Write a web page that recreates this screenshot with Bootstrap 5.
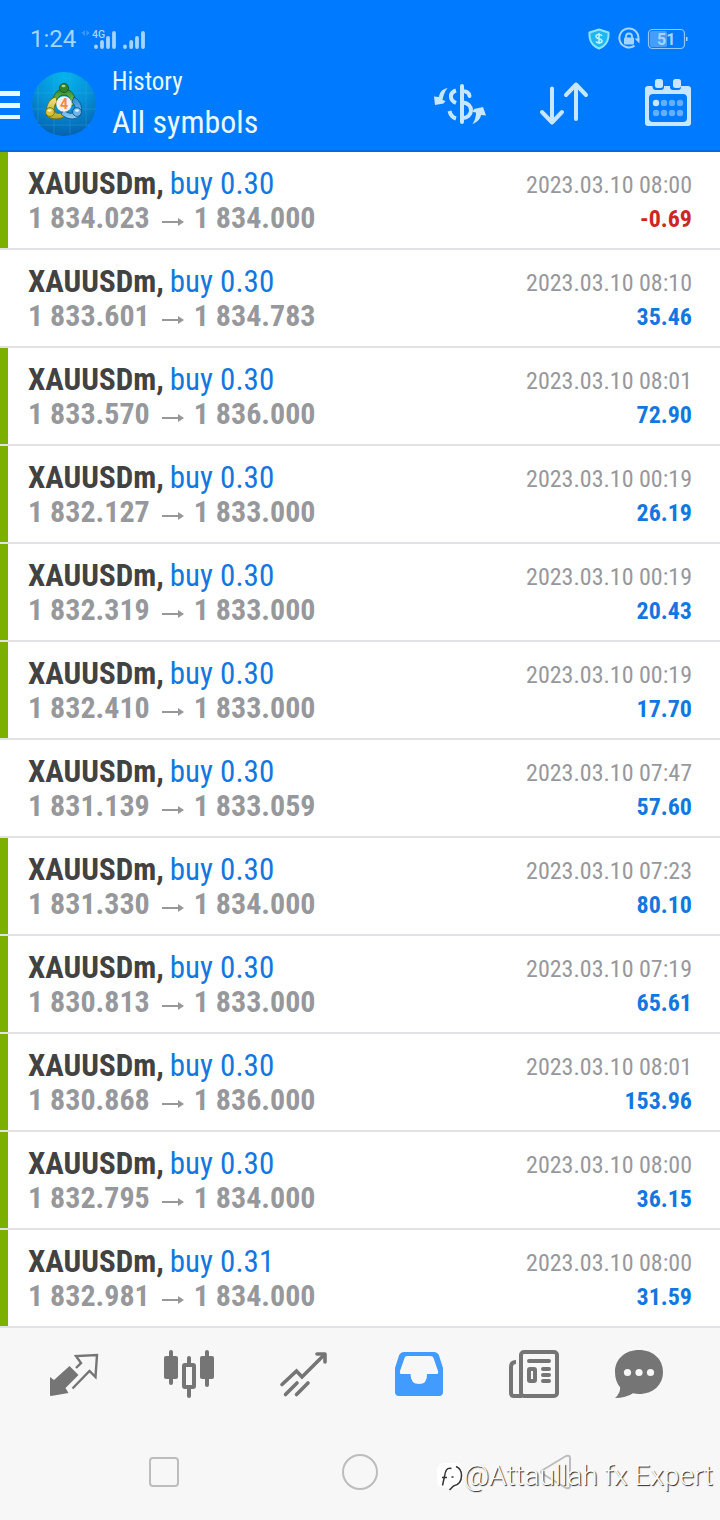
<!DOCTYPE html>
<html lang="en">
<head>
<meta charset="utf-8">
<meta name="viewport" content="width=device-width, initial-scale=1">
<title>History</title>
<link href="https://cdn.jsdelivr.net/npm/bootstrap@5.3.0/dist/css/bootstrap.min.css" rel="stylesheet">
<style>
  body { font-family: "Roboto Condensed", Roboto, sans-serif; background: #f7f7f7; color: #424242; }
  svg { display: block; flex: none; }
  .top-area { background: #007aff; border-bottom: 2px solid #0a68d8; }
  .status-bar { height: 58px; padding: 20px 32px 0 30px; font-family: Roboto, sans-serif; color: #a5d4ff; }
  .clock { font-size: 24px; line-height: 36px; }
  .app-bar { height: 92px; color: #e8f8ff; }
  .app-logo { margin-left: 12px; margin-right: 16px; }
  .screen-name { font-size: 25px; line-height: 32px; margin: 0; font-weight: 400; }
  .screen-filter { font-size: 32px; line-height: 40px; margin-top: 4px; }
  .plain-btn { background: none; border: 0; padding: 0; display: flex; align-items: center; justify-content: center; }
  .tool-btn { width: 104px; height: 92px; }
  .deal { height: 98px; padding: 14px 28px 0 28px; line-height: 34px; background: #fff; border-bottom: 2px solid #e2e2e4; }
  .deal.closed-tp { background: linear-gradient(#7cb000, #7cb000) left / 8px 100% no-repeat #fff; background-clip: padding-box; }
  .deal-title { display: flex; gap: 6px; font-size: 31px; line-height: 36px; }
  .deal-title a { color: #1477e0; text-decoration: none; }
  .deal-price { font-size: 30px; line-height: 32px; font-weight: 700; color: #97989c; }
  .deal-side { font-size: 24px; padding-top: 2px; color: #97989c; }
  .profit { font-weight: 700; color: #1477e0; }
  .loss { color: #cc2626; }
  .tab-bar { display: grid; grid-template-columns: repeat(5, 6fr) 5fr; padding: 0 33px 4px 17px; height: 96px; color: #757575; }
  .nav-keys { height: 96px; padding: 0 66px; }
  .nav-keys .plain-btn { flex: 1; }
  .signature { right: 7px; bottom: 26px; font: 300 28px/36px Roboto, sans-serif; color: #fff; text-shadow: 1px 1px 1px #222; pointer-events: none; }
</style>
</head>
<body>
<header class="top-area">
  <div class="status-bar d-flex justify-content-between align-items-center">
    <div class="d-flex align-items-center">
      <span class="clock">1:24</span>
      <svg width="72" height="24" viewBox="77 26 72 24" fill="#a5d4ff" aria-label="Signal 4G">
        <path d="M86 29v6l-3.500-3zM87.500 29v6l3-3z" opacity=".35"/>
        <text x="93" y="37" font-size="10.500" font-family="Roboto" font-weight="500">4G</text>
        <g stroke="#a5d4ff" stroke-width="3.800" stroke-linecap="round"><path d="M97 45.500v.5M103 41v5M109 37v9M115 32v14M126 45.500v.5M132.200 41v5M138 37v9M144 32v14"/></g>
      </svg>
    </div>
    <svg width="101" height="26" viewBox="587 25 101 26" fill="none" aria-label="Battery 51 percent">
      <path d="M599 28.500l9.500 3c.5 7-1 12.500-9.500 16-8.500-3.500-10-9-9.500-16z" fill="#1fb6f5" stroke="#8ee4f8" stroke-width="2" stroke-linejoin="round"/>
      <path d="M602 35c-1-2-6-2-6 .5 0 3 6 1.500 6 4.500 0 2.500-5 2.500-6 .3M599 32v11" stroke="#b6f2ff" stroke-width="1.600"/>
      <path d="M634.500 44.600a9.500 9.500 0 1 1 3.500-5" stroke="#a5d4ff" stroke-width="2"/>
      <path d="M634.500 37.500h5v5z" fill="#a5d4ff"/>
      <rect x="624" y="36.500" width="10" height="7" rx="1" fill="#a5d4ff"/>
      <path d="M626 37v-1.500a3 3 0 0 1 6 0V37" stroke="#a5d4ff" stroke-width="1.800"/>
      <rect x="650" y="30" width="17" height="16" rx="2" fill="#479dff"/>
      <rect x="648.500" y="28.500" width="36" height="19" rx="4" stroke="#8fc8ff" stroke-width="1.200"/>
      <path d="M686 36h1.500v4H686z" fill="#a5d4ff"/>
      <text x="657" y="44" font-size="16" font-family="Roboto" font-weight="700" fill="#a5d4ff">51</text>
    </svg>
  </div>
  <div class="app-bar d-flex">
    <button class="plain-btn" type="button" aria-label="Menu">
      <svg width="20" height="30" viewBox="0 0 20 30" fill="#e8f8ff"><path d="M0 2h20v5H0zM0 14h20v5H0zM0 26h20v5H0z"/></svg>
    </button>
    <svg class="app-logo align-self-center" width="64" height="64" viewBox="0 0 64 64" aria-label="App logo">
      <defs>
        <radialGradient id="disc" cx=".5" cy=".08" r=".95"><stop offset="0" stop-color="#06b4ec"/><stop offset=".5" stop-color="#0690d6"/><stop offset="1" stop-color="#045fae"/></radialGradient>
        <linearGradient id="gr" x2="0" y2="1"><stop offset="0" stop-color="#2f8a2a"/><stop offset="1" stop-color="#8fd070"/></linearGradient>
        <linearGradient id="ye" x2="0" y2="1"><stop offset="0" stop-color="#efe67a"/><stop offset="1" stop-color="#b8a81c"/></linearGradient>
        <linearGradient id="bl" x2="0" y2="1"><stop offset="0" stop-color="#2b8bd2"/><stop offset="1" stop-color="#8ccdf5"/></linearGradient>
      </defs>
      <circle cx="32" cy="32" r="32" fill="url(#disc)"/>
      <path d="M22 2v60M38 1v62M54 9v46M6 14v36M3 21h58M0 37h64M6 53h52" stroke="#49c3ee" stroke-width=".7" opacity=".35"/>
      <g stroke-width=".8">
        <path d="M21 33c-1-10 4-16 11-16s12 6 11 15l-4 2c0-7-2-11-7-11s-8 4-7 10z" fill="url(#gr)" stroke="#16551a"/>
        <path d="M24 25c-8 2-11 11-9 19 4 4 14 4 20-1l-2-4c-4 3-8 3-10 1-2-4 0-8 2-10z" fill="url(#ye)" stroke="#6a6410"/>
        <path d="M42 25c8 4 9 13 6 19-6 5-14 3-19-2l3-4c4 4 8 4 11 2 1-4 0-7-3-10z" fill="url(#bl)" stroke="#0b4c86"/>
        <circle cx="32" cy="16" r="4.600" fill="#35812c" stroke="#16551a"/>
        <circle cx="18" cy="40" r="4.400" fill="#d6c63a" stroke="#6a6410"/>
        <circle cx="45" cy="40" r="4.400" fill="#6cb4e8" stroke="#0b4c86"/>
      </g>
      <ellipse cx="31.500" cy="14" rx="2" ry="1.200" fill="#a3d494"/><ellipse cx="17.500" cy="38.500" rx="2" ry="1.200" fill="#f8f2a8"/><ellipse cx="45" cy="38.500" rx="2" ry="1.200" fill="#d7f0ff"/>
      <circle cx="32" cy="32" r="7.800" fill="#f3f1ec"/>
      <text x="32" y="37" text-anchor="middle" font-family="Roboto" font-size="14" font-weight="700" fill="#f08a45">4</text>
    </svg>
    <div class="flex-grow-1 pt-2">
      <h1 class="screen-name">History</h1>
      <div class="screen-filter">All symbols</div>
    </div>
    <button class="plain-btn tool-btn" type="button" aria-label="Symbol">
      <svg width="54" height="46" viewBox="433 80 54 46" fill="none" stroke="#c8e7ff" stroke-width="4">
        <path d="M462 85v36M462 90c4 0 7 1.500 7.500 5" stroke-linecap="round"/>
        <path d="M456 89.500c-6.500 2-7 9.500 0 12.500M462 101.500c12 0 12 15.500 0 15.500M456 117.500c-3.500-1-5.500-3.500-6.500-7.500"/>
        <path d="M447.500 87c-5 1-8 4-8.500 9l-5-.5 1 8.500 8.500-1.500 2-2.500-3-1c1-5 2-8 5-12zM472.500 123c5-2 8-5 8.500-9l5 .5-3-8.500-9 2-1.500 3 3.500.5c0 4-1 8-3.500 11.500z" fill="#c8e7ff" stroke="none"/>
      </svg>
    </button>
    <button class="plain-btn tool-btn" type="button" aria-label="Sort">
      <svg width="50" height="46" viewBox="539 81 50 46" fill="none" stroke="#c8e7ff" stroke-width="4" stroke-linecap="round" stroke-linejoin="round"><path d="M552 88.500v34M542 112l10 10.500L562 112M576 119V84.500M566 95l10-10.500L586 95"/></svg>
    </button>
    <button class="plain-btn tool-btn" type="button" aria-label="Period">
      <svg width="46" height="48" viewBox="645 80 46 48" overflow="visible">
        <path fill="#c8e7ff" fill-rule="evenodd" d="M648 86h4.500v1q.5 3 3 3h5.500q3 0 3-3v-1h6v1q0 3 3 3h5q3 0 3-3v-1h7q3 0 3 3v34q0 3-3 3h-40q-3 0-3-3V89q0-3 3-3zM653 94q-4 0-4 4v20q0 4 4 4h30q4 0 4-4V98q0-4-4-4z"/>
        <rect x="655" y="79" width="8" height="9" rx="2.500" fill="#c8e7ff"/><rect x="673" y="79" width="8" height="9" rx="2.500" fill="#c8e7ff"/>
        <circle cx="656" cy="103" r="3.200" fill="#c8e7ff"/>
        <g fill="#62afff"><circle cx="664" cy="103" r="3.200"/><circle cx="672" cy="103" r="3.200"/><circle cx="680" cy="103" r="3.200"/><circle cx="656" cy="113" r="3.200"/><circle cx="664" cy="113" r="3.200"/><circle cx="672" cy="113" r="3.200"/><circle cx="680" cy="113" r="3.200"/></g>
      </svg>
    </button>
  </div>
</header>

<main>
  <ul class="list-unstyled m-0" id="deals"></ul>
</main>

<footer class="position-relative">
  <nav class="tab-bar" aria-label="Sections">
    <button class="plain-btn" type="button" aria-label="Quotes">
      <svg width="50" height="50" viewBox="49 1349 50 50" fill="#757575"><path d="M50 1377l4 3 15.500-14 9 9-13 13 3 5-17.500 3q-1 0-1-1z"/><path d="M76 1368l5-5-5-7 21-1-1.500 22-6-6-17 17.500" fill="none" stroke="#757575" stroke-width="2.400"/></svg>
    </button>
    <button class="plain-btn" type="button" aria-label="Charts">
      <svg width="50" height="50" viewBox="164 1349 50 50" fill="#757575"><rect x="164" y="1356" width="14" height="23" rx="2"/><rect x="200" y="1356" width="14" height="23" rx="2"/><path d="M171 1352v31M207 1352v33M189 1358v7M189 1389v7" stroke="#757575" stroke-width="4" stroke-linecap="round"/><rect x="184" y="1365" width="10" height="22" rx="1" fill="none" stroke="#757575" stroke-width="4"/></svg>
    </button>
    <button class="plain-btn" type="button" aria-label="Trade">
      <svg width="50" height="50" viewBox="279 1349 50 50" fill="none" stroke="#757575" stroke-width="3.600" stroke-linecap="round"><path d="M282 1384.500l14.500-13.500 5.500 6 21-21M285.500 1394.500L297 1383M296.500 1394.500L308 1383"/><path d="M317 1354h8v8" stroke-linejoin="round"/></svg>
    </button>
    <button class="plain-btn" type="button" aria-label="History" aria-current="page">
      <svg width="50" height="50" viewBox="394 1349 50 50"><path fill="#429bff" fill-rule="evenodd" d="M404 1352h30q3.500 0 5 3.500l4 12.500v24q0 4-4 4h-40q-4 0-4-4v-24l4-12.500q1.500-3.500 5-3.500zM407 1356q-2 0-2.500 2L400 1371q-.5 3 1 3h9.500q0 10 8.500 10t8-10h9.500q2.500 0 1.500-3l-4.500-13q-.5-2-3-2z"/></svg>
    </button>
    <button class="plain-btn" type="button" aria-label="News">
      <svg width="50" height="50" viewBox="509 1349 50 50" fill="none" stroke="#757575" stroke-width="4"><rect x="521" y="1352" width="36" height="44" rx="3"/><path d="M516 1362q-5 0-5 5v26q0 3 3 3h8"/><path d="M529 1361h20M543 1369h6M543 1375h6M543 1381h6" stroke-linecap="round"/><rect x="529" y="1369" width="6" height="12" rx="1"/></svg>
    </button>
    <button class="plain-btn" type="button" aria-label="Chat">
      <svg width="50" height="50" viewBox="614 1349 50 50"><path fill="#757575" d="M639 1350c14 0 24 9 24 22s-10 22-24 22q-3 0-6-.7-7 4.700-18 4.700 5-4 5.200-10.500C616.500 1383 615 1378 615 1372c0-13 10-22 24-22z"/><g fill="#f7f7f7"><circle cx="627.500" cy="1372.500" r="3.600"/><circle cx="639" cy="1372.500" r="3.600"/><circle cx="650.500" cy="1372.500" r="3.600"/></g></svg>
    </button>
  </nav>
  <div class="nav-keys d-flex">
    <button class="plain-btn" type="button" aria-label="Recent apps"><svg width="36" height="36" fill="none" stroke="#bdbdbd" stroke-width="2"><rect x="4" y="4" width="28" height="28" rx="3"/></svg></button>
    <button class="plain-btn" type="button" aria-label="Home"><svg width="36" height="36" fill="none" stroke="#bdbdbd" stroke-width="2"><circle cx="18" cy="18" r="17"/></svg></button>
    <button class="plain-btn" type="button" aria-label="Back"><svg width="36" height="36" fill="none" stroke="#bdbdbd" stroke-width="2" stroke-linejoin="round"><path d="M4 16.500L28 2q4-1 4 2v28q0 3-4 2L4 19.500q-2-1.500 0-3z"/></svg></button>
  </div>
  <div class="signature position-absolute d-flex align-items-center">
    <svg width="28" height="32" viewBox="0 0 28 32"><rect x="1" y="3" width="25" height="25" rx="7" fill="#fff"/><g fill="none" stroke="#333" stroke-width="1.500"><path d="M15.500 8.500c-5-1-6 2-7 8l-2 9M6 17.500h5M15.500 17h2"/><path d="M20 6.500c4 1.500 5.500 5 5.500 9 0 6-3 9.500-8 10.500l-4 4"/></g></svg>
    <span>@Attaullah fx Expert</span>
  </div>
</footer>

<script src="https://cdn.jsdelivr.net/npm/bootstrap@5.3.0/dist/js/bootstrap.bundle.min.js"></script>
<script>
  // volume, open price, close price, time, profit, closed by take profit
  const deals = [
    ["0.30", "1 834.023", "1 834.000", "08:00", "-0.69", 1],
    ["0.30", "1 833.601", "1 834.783", "08:10", "35.46", 0],
    ["0.30", "1 833.570", "1 836.000", "08:01", "72.90", 1],
    ["0.30", "1 832.127", "1 833.000", "00:19", "26.19", 1],
    ["0.30", "1 832.319", "1 833.000", "00:19", "20.43", 1],
    ["0.30", "1 832.410", "1 833.000", "00:19", "17.70", 1],
    ["0.30", "1 831.139", "1 833.059", "07:47", "57.60", 0],
    ["0.30", "1 831.330", "1 834.000", "07:23", "80.10", 1],
    ["0.30", "1 830.813", "1 833.000", "07:19", "65.61", 1],
    ["0.30", "1 830.868", "1 836.000", "08:01", "153.96", 1],
    ["0.30", "1 832.795", "1 834.000", "08:00", "36.15", 1],
    ["0.31", "1 832.981", "1 834.000", "08:00", "31.59", 1]
  ];
  document.getElementById("deals").innerHTML = deals.map(([vol, open, close, time, profit, tp]) => `
    <li class="deal d-flex justify-content-between ${tp ? "closed-tp" : ""}">
      <div>
        <div class="deal-title"><strong>XAUUSDm,</strong> <a href="#">buy ${vol}</a></div>
        <div class="deal-price d-flex align-items-center">${open}
          <svg class="mx-2" width="28" height="32" fill="none" stroke="#97989c" stroke-width="2"><path d="M4 20h18"/><path d="M20 16l6 4-6 4z" fill="#97989c" stroke="none"/></svg>${close}</div>
      </div>
      <div class="deal-side text-end">
        <div>2023.03.10 ${time}</div>
        <div class="profit ${profit < 0 ? "loss" : ""}">${profit}</div>
      </div>
    </li>`).join("");
</script>
</body>
</html>
